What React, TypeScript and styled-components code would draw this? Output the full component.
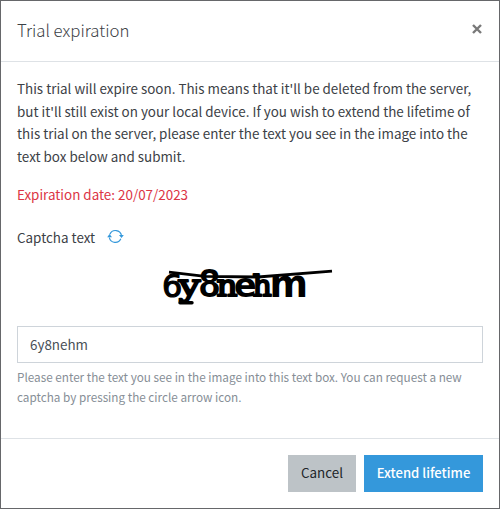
import React from "react";
import styled, { createGlobalStyle } from "styled-components";

const Global = createGlobalStyle`
  * { box-sizing: border-box; }
  body { margin: 0; background: #fff; }
  button, input { font-family: inherit; border-radius: 0; margin: 0; }
`;

const Dialog = styled.section`
  width: 500px;
  height: 509px;
  display: flex;
  flex-direction: column;
  background: #fff;
  border: 1px solid #66676a;
  color: #3c4146;
  font: 400 13.42px/22.5px "Noto Sans CJK SC", "Noto Sans", sans-serif;
`;

const Header = styled.header`
  height: 61px;
  flex: none;
  display: flex;
  align-items: center;
  justify-content: space-between;
  padding: 0 17px 2px 16px;
  border-bottom: 1px solid #dee2e6;
`;

const Title = styled.h1`
  margin: 0;
  font-size: 16.8px;
  font-weight: 300;
  white-space: nowrap;
`;

const Close = styled.button`
  display: flex;
  padding: 0;
  margin-top: -3px;
  border: 0;
  background: none;
`;

const Body = styled.div`
  flex: 1;
  padding: 15px 16px 16px;
`;

const Message = styled.p<{ $danger?: boolean }>`
  margin: 0 0 16px;
  white-space: nowrap;
  color: ${(p) => (p.$danger ? "#dc3545" : "inherit")};
`;

const Label = styled.label`
  display: flex;
  align-items: center;
  gap: 12px;
  margin-top: 20px;
`;

const Captcha = styled.svg`
  display: block;
  width: 200px;
  height: 60px;
  margin: 7px auto 0 133px;
`;

const Input = styled.input`
  display: block;
  width: 100%;
  height: 37px;
  margin-top: 11px;
  padding: 0 12px 1px;
  border: 1px solid #ced4da;
  color: #495057;
  background: #fff;
  font-size: 13.42px;
  outline: none;
`;

const Hint = styled.small`
  display: block;
  margin-top: 4px;
  font-size: 11.73px;
  line-height: 20px;
  color: #868e96;
  white-space: nowrap;
`;

const Footer = styled.footer`
  height: 70px;
  flex: none;
  display: flex;
  align-items: flex-start;
  justify-content: flex-end;
  gap: 8px;
  padding: 16px;
  border-top: 1px solid #dee2e6;
`;

const Button = styled.button<{ $primary?: boolean }>`
  width: ${(p) => (p.$primary ? 119 : 68)}px;
  height: 37px;
  padding: ${(p) => (p.$primary ? "0 0 2px" : "0 0 3px")};
  border: 0;
  font-size: ${(p) => (p.$primary ? 13.1 : 13.4)}px;
  font-weight: ${(p) => (p.$primary ? 500 : 400)};
  white-space: nowrap;
  color: ${(p) => (p.$primary ? "#fff" : "#212529")};
  background: ${(p) => (p.$primary ? "#3498db" : "#bdc3c7")};
`;

const RefreshIcon = () => (
  <svg width="17" height="15" viewBox="0 0 17 15" fill="none" stroke="#3498db" strokeWidth="1.2">
    <path d="M2.9 5.2A6.1 6.1 0 0 1 14.5 6.5M13.8 9.8A6.1 6.1 0 0 1 2.3 8.5" />
    <path d="M.2 8.3L2.5 5.1L5 8.3ZM12 6L14.5 9.1L16.8 6Z" fill="#3498db" stroke="none" />
  </svg>
);

const CaptchaImage = () => (
  <Captcha viewBox="150 255 200 60">
    <path d="M169 272.2L205 276.3L258 277L332 271.2" fill="none" stroke="#000" strokeWidth="2.8" />
    <path d="M180 302.7H192" stroke="#000" strokeWidth="3.4" strokeLinecap="round" />
    <g fontFamily="DejaVu Sans" fontSize="32" stroke="#000" strokeLinejoin="round" strokeWidth="0">
      <text x="162" y="296.5" strokeWidth="1.2">6</text>
      <text x="178.5" y="296" fontFamily="DejaVu Serif" fontSize="29" strokeWidth="1.8" textLength="22" lengthAdjust="spacingAndGlyphs">y</text>
      <text x="199" y="297" fontFamily="Liberation Sans" fontWeight="700" fontSize="40" textLength="21" lengthAdjust="spacingAndGlyphs">8</text>
      <text x="216.5" y="296" fontFamily="DejaVu Serif" fontSize="29" strokeWidth="2" textLength="21" lengthAdjust="spacingAndGlyphs">n</text>
      <text x="234" y="297" fontWeight="700" fontSize="33.5">e</text>
      <text x="252.5" y="296" fontFamily="DejaVu Serif" fontSize="30" strokeWidth="2">h</text>
      <text x="269.5" y="297" fontWeight="700" fontSize="37">m</text>
    </g>
  </Captcha>
);

export default function App() {
  return (
    <>
      <Global />
      <Dialog role="dialog" aria-label="Trial expiration">
        <Header>
          <Title>Trial expiration</Title>
          <Close aria-label="Close">
            <svg width="10" height="10" viewBox="0 0 10 10" stroke="#797979" strokeWidth="2.4">
              <path d="M1 1L9 9M9 1L1 9" />
            </svg>
          </Close>
        </Header>
        <Body>
          <Message>
            This trial will expire soon. This means that it'll be deleted from the server,<br />
            but it'll still exist on your local device. If you wish to extend the lifetime of<br />
            this trial on the server, please enter the text you see in the image into the<br />
            text box below and submit.
          </Message>
          <Message $danger>Expiration date: 20/07/2023</Message>
          <Label htmlFor="captcha">
            Captcha text
            <RefreshIcon />
          </Label>
          <CaptchaImage />
          <Input id="captcha" defaultValue="6y8nehm" />
          <Hint>
            Please enter the text you see in the image into this text box. You can request a new<br />
            captcha by pressing the circle arrow icon.
          </Hint>
        </Body>
        <Footer>
          <Button>Cancel</Button>
          <Button $primary>Extend lifetime</Button>
        </Footer>
      </Dialog>
    </>
  );
}
